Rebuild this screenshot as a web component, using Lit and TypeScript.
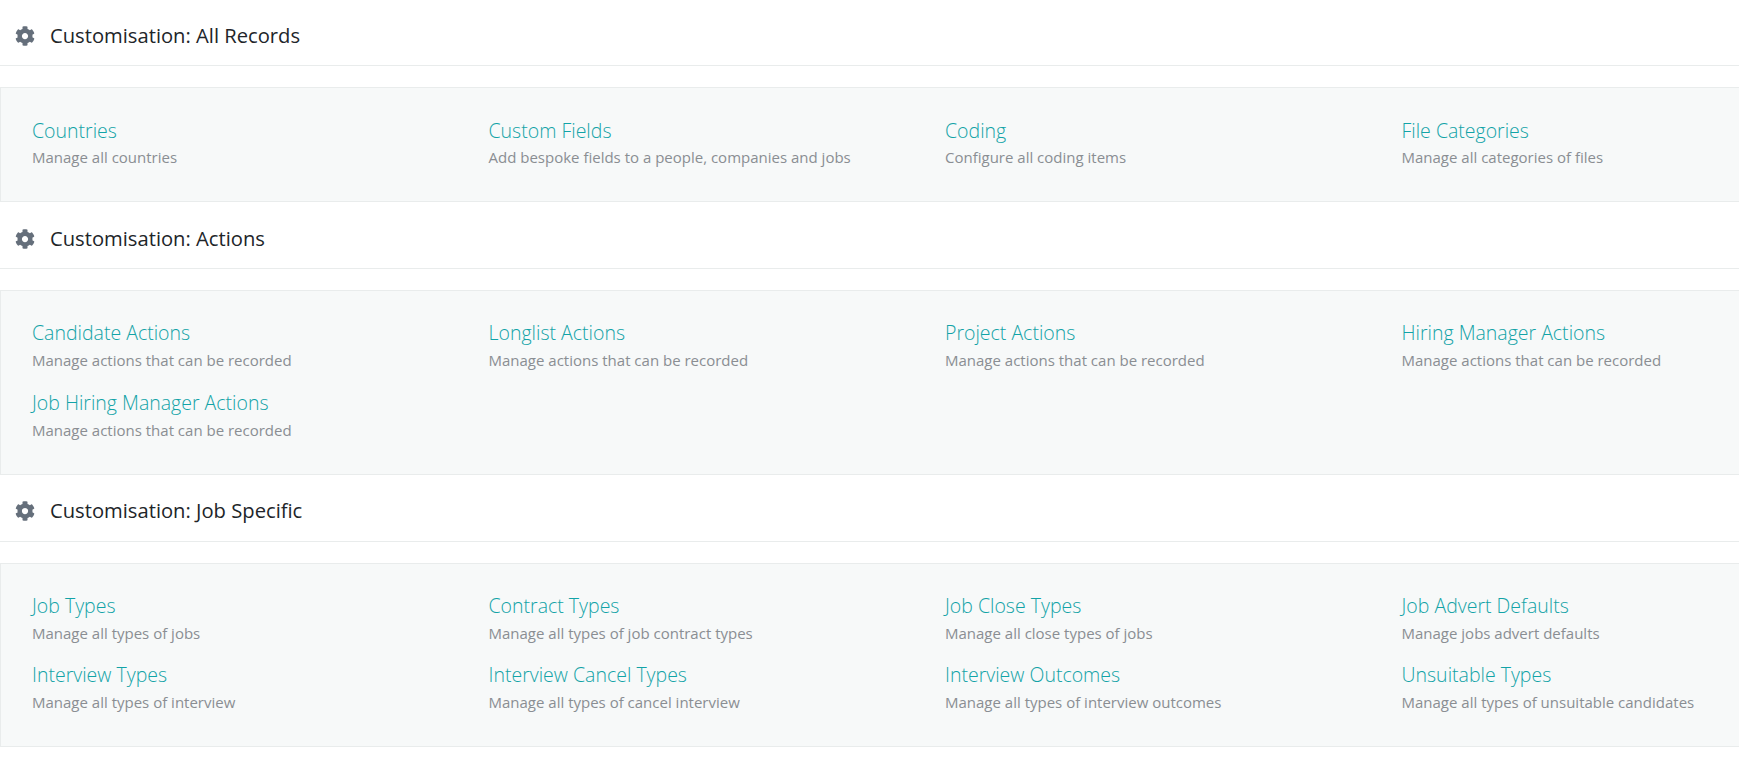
import { LitElement, html, css, svg } from "lit";
import { customElement } from "lit/decorators.js";

const COG = svg`<path d="M487.4 315.7l-42.6-24.6c4.3-23.2 4.3-47 0-70.2l42.6-24.6c4.9-2.8 7.1-8.6 5.5-14-11.1-35.6-30-67.8-54.7-94.6-3.8-4.1-10-5.1-14.8-2.3L380.8 110c-17.9-15.4-38.5-27.3-60.8-35.1V25.8c0-5.6-3.9-10.5-9.4-11.7-36.7-8.2-74.3-7.8-109.2 0-5.5 1.2-9.4 6.1-9.4 11.7V75c-22.2 7.9-42.8 19.8-60.8 35.1L88.7 85.5c-4.9-2.8-11-1.9-14.8 2.3-24.7 26.7-43.6 58.9-54.7 94.6-1.7 5.4.6 11.2 5.5 14L67.3 221c-4.3 23.2-4.3 47 0 70.2l-42.6 24.6c-4.9 2.8-7.1 8.6-5.5 14 11.1 35.6 30 67.8 54.7 94.6 3.8 4.1 10 5.1 14.8 2.3l42.6-24.6c17.9 15.4 38.5 27.3 60.8 35.1v49.2c0 5.6 3.9 10.5 9.4 11.7 36.7 8.2 74.3 7.8 109.2 0 5.5-1.2 9.4-6.1 9.4-11.7v-49.2c22.2-7.9 42.8-19.8 60.8-35.1l42.6 24.6c4.9 2.8 11 1.9 14.8-2.3 24.7-26.7 43.6-58.9 54.7-94.6 1.5-5.5-.7-11.3-5.6-14.1zM256 336c-44.1 0-80-35.9-80-80s35.9-80 80-80 80 35.9 80 80-35.9 80-80 80z"/>`;

const SECTIONS: { title: string; cls: string; items: [string, string][] }[] = [
  {
    title: "Customisation: All Records",
    cls: "first",
    items: [
      ["Countries", "Manage all countries"],
      ["Custom Fields", "Add bespoke fields to a people, companies and jobs"],
      ["Coding", "Configure all coding items"],
      ["File Categories", "Manage all categories of files"],
    ],
  },
  {
    title: "Customisation: Actions",
    cls: "second",
    items: [
      ["Candidate Actions", "Manage actions that can be recorded"],
      ["Longlist Actions", "Manage actions that can be recorded"],
      ["Project Actions", "Manage actions that can be recorded"],
      ["Hiring Manager Actions", "Manage actions that can be recorded"],
      ["Job Hiring Manager Actions", "Manage actions that can be recorded"],
    ],
  },
  {
    title: "Customisation: Job Specific",
    cls: "third",
    items: [
      ["Job Types", "Manage all types of jobs"],
      ["Contract Types", "Manage all types of job contract types"],
      ["Job Close Types", "Manage all close types of jobs"],
      ["Job Advert Defaults", "Manage jobs advert defaults"],
      ["Interview Types", "Manage all types of interview"],
      ["Interview Cancel Types", "Manage all types of cancel interview"],
      ["Interview Outcomes", "Manage all types of interview outcomes"],
      ["Unsuitable Types", "Manage all types of unsuitable candidates"],
    ],
  },
];

@customElement("app-root")
export class AppRoot extends LitElement {
  static styles = css`
    :host {
      display: block;
      width: 100%;
      overflow: hidden;
      background: #fff;
      font-family: "Open Sans", sans-serif;
    }
    .header {
      display: flex;
      align-items: center;
      gap: 15px;
      height: 67px;
      padding: 4px 0 0 15px;
      border-bottom: 1px solid #e9ecec;
      box-sizing: border-box;
      font-size: 20.2px;
      color: #212529;
    }
    .header.first {
      height: 66px;
    }
    .header.second {
      padding-top: 6px;
    }
    .header svg {
      width: 20px;
      height: 20px;
      margin-top: 2px;
      fill: #656f7b;
      flex: none;
    }
    .panel {
      display: grid;
      grid-template-columns: repeat(4, 456.5px);
      width: 1860px;
      box-sizing: border-box;
      margin-top: 21px;
      padding: 25px 0 19px 31px;
      background: #f7f9f9;
      border: 1px solid #e9ecec;
    }
    .panel.second {
      padding-top: 24px;
      padding-bottom: 19px;
    }
    .panel.third {
      padding-top: 23px;
      padding-bottom: 21px;
    }
    .item {
      height: 69px;
      display: flex;
      flex-direction: column;
    }
    .second .item {
      height: 70px;
    }
    .name {
      font-size: 19.5px;
      font-weight: 300;
      line-height: 36px;
      height: 34px;
      color: #12a3a7;
    }
    .second .name {
      height: 35px;
    }
    .third .name {
      height: 36px;
      line-height: 38px;
    }
    .desc {
      font-size: 15px;
      line-height: 20px;
      color: #8a8e93;
    }
  `;

  render() {
    return SECTIONS.map(
      (s) => html`
        <div class="header ${s.cls}">
          <svg viewBox="0 0 512 512">${COG}</svg>
          <span>${s.title}</span>
        </div>
        <div class="panel ${s.cls}">
          ${s.items.map(
            ([n, d]) => html`<div class="item"><span class="name">${n}</span><span class="desc">${d}</span></div>`
          )}
        </div>
      `
    );
  }
}
